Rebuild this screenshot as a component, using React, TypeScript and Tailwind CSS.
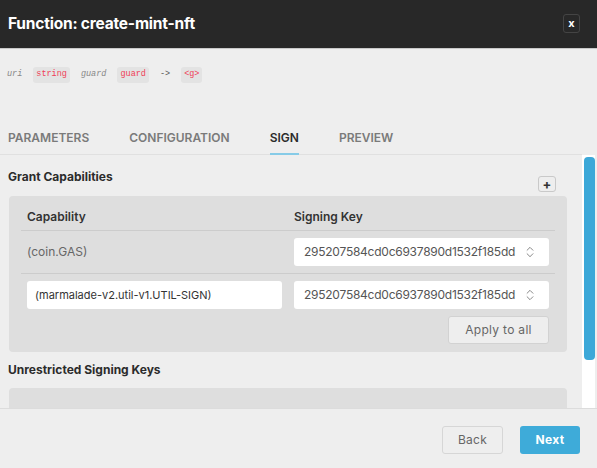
import React from "react";
import { ChevronsUpDown } from "lucide-react";

const KEY = "295207584cd0c6937890d1532f185dd";

const Badge: React.FC<{ children: React.ReactNode }> = ({ children }) => (
  <span className="bg-[#e3e3e3] text-[#f03e57] rounded-[3px] px-[3px] h-[16px] flex items-center">
    {children}
  </span>
);

const KeySelect: React.FC = () => (
  <div className="h-[28px] w-full bg-white rounded-[3px] flex items-center justify-between pl-[10px] pr-[12px] text-[12px] text-[#555]">
    <span className="tracking-[-0.25px]">{KEY}</span>
    <ChevronsUpDown size={14} strokeWidth={1.5} className="text-[#777]" />
  </div>
);

const tabs = ["PARAMETERS", "CONFIGURATION", "SIGN", "PREVIEW"];

const App: React.FC = () => {
  return (
    <div className="w-[597px] h-[468px] bg-[#eeeeee] flex flex-col overflow-hidden font-['Inter',sans-serif]">
      {/* header */}
      <div className="h-[49px] shrink-0 bg-[#282828] border-b border-[#c8c8c8] flex items-center justify-between pl-[8px] pr-[17px]">
        <h1 className="text-white font-bold text-[15.5px] tracking-[-0.2px]">Function: create-mint-nft</h1>
        <button className="w-[17px] h-[19px] mt-[-2px] border border-[#444] rounded-[3px] text-white text-[11px] font-bold flex items-center justify-center leading-none">
          x
        </button>
      </div>

      {/* signature */}
      <div className="h-[48px] shrink-0 flex items-center gap-[11px] pl-[7px] pt-[3px] font-['Liberation_Mono',monospace] text-[8.5px]">
        <span className="italic text-[#888]">uri</span>
        <Badge>string</Badge>
        <span className="italic text-[#888]">guard</span>
        <Badge>guard</Badge>
        <span className="text-[#555]">-&gt;</span>
        <Badge>&lt;g&gt;</Badge>
      </div>

      {/* tabs */}
      <div className="h-[58px] shrink-0 flex items-end mr-[15px]">
        <div className="w-full flex gap-[40px] pl-[8px] border-b border-[#e0e0e0] text-[12px] font-semibold">
          {tabs.map((t) => (
            <div
              key={t}
              className={
                t === "SIGN"
                  ? "pb-[6px] text-[#2b2b2b] border-b-2 border-[#86cbe7] -mb-px"
                  : "pb-[6px] text-[#7a7a7a]"
              }
            >
              {t}
            </div>
          ))}
        </div>
      </div>

      {/* scroll area */}
      <div className="flex-1 flex min-h-0">
        <div className="flex-1 overflow-hidden pl-[9px] pr-[15px]">
          <div className="flex items-center justify-between pt-[7px] -ml-[1px]">
            <h3 className="text-[12px] font-bold text-[#2b2b2b]">Grant Capabilities</h3>
            <button className="w-[18px] h-[16px] mr-[11px] mt-[14px] border border-[#c9c9c9] rounded-[3px] bg-[#eeeeee] flex items-center justify-center text-[13px] font-bold text-[#333] leading-none">
              +
            </button>
          </div>

          <div className="mt-[4px] bg-[#dedede] rounded-[4px] px-[12px] pt-[8px] pb-[8px]">
            <div className="grid grid-cols-2 h-[27px] items-center border-b border-[#cccccc] text-[12px] font-semibold text-[#333]">
              <div className="px-[6px]">Capability</div>
              <div className="px-[6px]">Signing Key</div>
            </div>
            <div className="grid grid-cols-2 h-[43px] items-center border-b border-[#cccccc] text-[12px]">
              <div className="px-[6px] text-[#666]">(coin.GAS)</div>
              <div className="px-[6px]">
                <KeySelect />
              </div>
            </div>
            <div className="grid grid-cols-2 pt-[7px] items-center">
              <div className="px-[6px]">
                <div className="h-[28px] bg-white rounded-[3px] flex items-center pl-[8px] text-[11px] text-[#333]">
                  (marmalade-v2.util-v1.UTIL-SIGN)
                </div>
              </div>
              <div className="px-[6px]">
                <KeySelect />
              </div>
            </div>
            <div className="flex justify-end pr-[6px] pt-[7px]">
              <button className="w-[101px] h-[28px] bg-[#eeeeee] border border-[#d2d2d2] rounded-[3px] text-[12px] text-[#666] tracking-[0.3px]">
                Apply to all
              </button>
            </div>
          </div>

          <h3 className="mt-[10px] -ml-[1px] h-[16px] text-[12px] font-bold text-[#2b2b2b] flex items-center">
            Unrestricted Signing Keys
          </h3>
          <div className="mt-[10px] bg-[#dedede] rounded-[4px] h-[80px]" />
        </div>

        {/* scrollbar */}
        <div className="w-[13px] mr-[2px] bg-white pt-[2px] pl-[2px]">
          <div className="h-[203px] bg-[#3ca8d8] rounded-[4px]" />
        </div>
      </div>

      {/* footer */}
      <div className="h-[60px] shrink-0 border-t border-[#dcdcdc] flex items-center justify-end gap-[17px] pr-[17px] pt-[3px]">
        <button className="w-[61px] h-[28px] border border-[#d6d6d6] rounded-[3px] text-[12px] text-[#666] tracking-[0.3px]">
          Back
        </button>
        <button className="w-[60px] h-[28px] bg-[#3eabd9] rounded-[3px] text-[12px] font-bold text-white tracking-[0.3px]">
          Next
        </button>
      </div>
    </div>
  );
};

export default App;
